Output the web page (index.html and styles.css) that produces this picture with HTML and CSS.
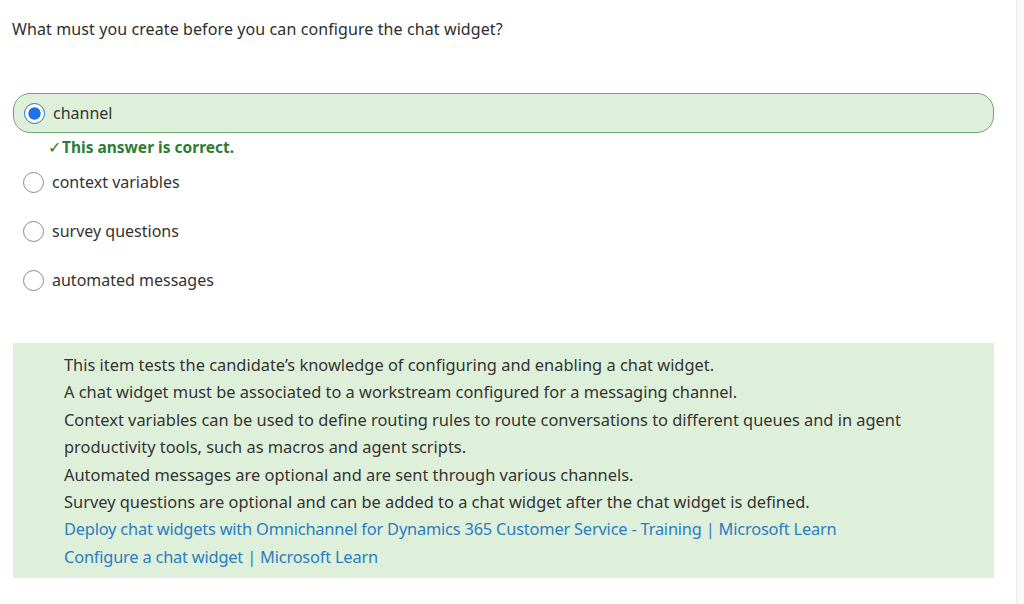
FILE: index.html
```html
<!DOCTYPE html>
<html lang="en">
<head>
<meta charset="utf-8">
<title>Quiz</title>
<link rel="stylesheet" href="styles.css">
</head>
<body>
<div class="page">
  <main class="main">
    <p class="question">What must you create before you can configure the chat widget?</p>
    <div class="options">
      <div class="option selected">
        <span class="radio checked"></span>
        <span class="label">channel</span>
      </div>
      <div class="feedback"><span class="tick">✓</span>This answer is correct.</div>
      <div class="option">
        <span class="radio"></span>
        <span class="label">context variables</span>
      </div>
      <div class="option">
        <span class="radio"></span>
        <span class="label">survey questions</span>
      </div>
      <div class="option">
        <span class="radio"></span>
        <span class="label">automated messages</span>
      </div>
    </div>
    <div class="explain">
      <p>This item tests the candidate’s knowledge of configuring and enabling a chat widget.</p>
      <p>A chat widget must be associated to a workstream configured for a messaging channel.</p>
      <p>Context variables can be used to define routing rules to route conversations to different queues and in agent productivity tools, such as macros and agent scripts.</p>
      <p>Automated messages are optional and are sent through various channels.</p>
      <p>Survey questions are optional and can be added to a chat widget after the chat widget is defined.</p>
      <p><a href="#">Deploy chat widgets with Omnichannel for Dynamics 365 Customer Service - Training | Microsoft Learn</a></p>
      <p><a href="#">Configure a chat widget | Microsoft Learn</a></p>
    </div>
  </main>
  <div class="scrollbar"></div>
</div>
</body>
</html>
```
FILE: styles.css
```css
html, body {
  margin: 0;
  padding: 0;
  background: #ffffff;
}
body {
  font-family: "Noto Sans", "Open Sans", sans-serif;
  color: #2b2b2b;
}
.page {
  display: flex;
  width: 1024px;
  height: 604px;
  overflow: hidden;
}
.main {
  flex: 1;
  padding: 19px 22px 0 13px;
}
.scrollbar {
  width: 7px;
  border-left: 1px solid #ececec;
  background: #f9f9f9;
}
.question {
  margin: 0 0 0 -1px;
  font-size: 16px;
  line-height: 20px;
  letter-spacing: 0.1px;
  color: #2e2e2e;
}
.options {
  margin-top: 54px;
  display: flex;
  flex-direction: column;
}
.option {
  display: flex;
  align-items: center;
  height: 40px;
  padding-left: 10px;
  font-size: 16px;
  color: #333333;
  margin-bottom: 9px;
}
.option.selected {
  box-sizing: border-box;
  border: 1.5px solid #6ea86e;
  border-radius: 17px;
  background: #dff0da;
  margin-bottom: 0;
}
.radio {
  width: 19px;
  height: 19px;
  border: 1.5px solid #8a8a8a;
  border-radius: 50%;
  margin-right: 8px;
  background: #fff;
  flex: none;
}
.radio.checked {
  border: 1.5px solid #1f6fd8;
  background: radial-gradient(circle, #1a73e8 0 5.8px, #ffffff 6.5px);
}
.feedback {
  height: 28px;
  line-height: 28px;
  padding-left: 35px;
  font-size: 15.5px;
  font-weight: 700;
  color: #2e7d32;
  margin-bottom: 1px;
}
.tick {
  font-weight: 400;
  margin-right: 1px;
}
.explain {
  margin-top: 34px;
  background: #dff0da;
  padding: 8px 40px 8px 51px;
}
.explain p {
  margin: 0;
  font-size: 16.4px;
  line-height: 27.4px;
  color: #333333;
}
.explain a {
  color: #2b7cc0;
  text-decoration: none;
  letter-spacing: -0.2px;
}
```
